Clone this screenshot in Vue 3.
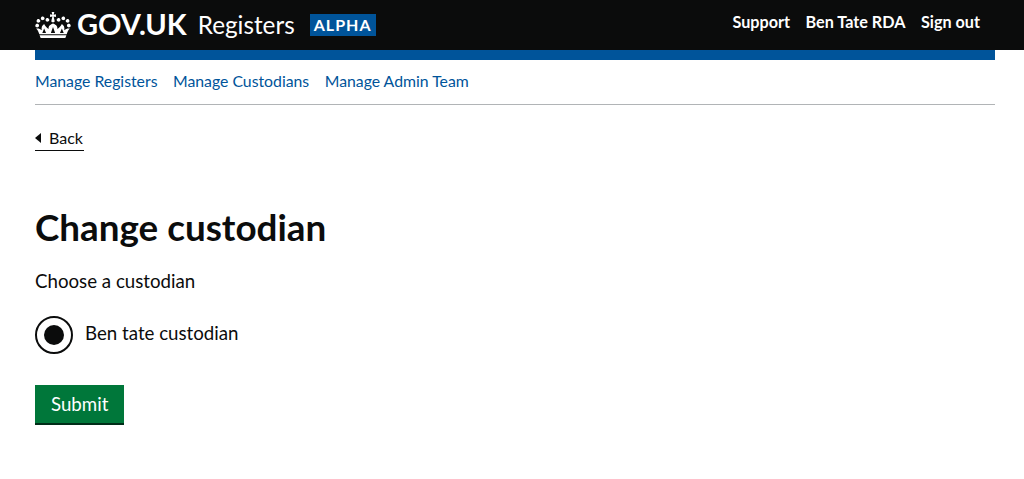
<template>
  <div class="page">
    <header class="header">
      <div class="header__inner">
        <a class="logo" href="#">
          <svg class="logo__crown" viewBox="0 0 132 97" aria-hidden="true">
            <path fill="currentColor" d="M25 30.2c3.5 1.5 7.7-.2 9.1-3.7 1.5-3.6-.2-7.8-3.9-9.2-3.6-1.4-7.6.3-9.1 3.9-1.4 3.5.3 7.5 3.9 9zM9 39.5c3.6 1.5 7.8-.2 9.2-3.7 1.5-3.6-.2-7.8-3.9-9.1-3.6-1.5-7.6.2-9.1 3.8-1.4 3.5.3 7.5 3.8 9zM4.4 57.2c3.5 1.5 7.7-.2 9.1-3.8 1.5-3.6-.2-7.7-3.9-9.1-3.5-1.5-7.6.3-9.1 3.8-1.4 3.5.3 7.6 3.9 9.1zm38.3-21.4c3.5 1.5 7.7-.2 9.1-3.8 1.5-3.6-.2-7.7-3.9-9.1-3.6-1.5-7.6.3-9.1 3.8-1.3 3.6.4 7.7 3.9 9.1zm64.4-5.6c-3.6 1.5-7.8-.2-9.1-3.7-1.5-3.6.2-7.8 3.8-9.2 3.6-1.4 7.7.3 9.2 3.9 1.3 3.5-.4 7.5-3.9 9zm15.9 9.3c-3.6 1.5-7.7-.2-9.1-3.7-1.5-3.6.2-7.8 3.7-9.1 3.6-1.5 7.7.2 9.2 3.8 1.5 3.5-.3 7.5-3.8 9zm4.7 17.7c-3.6 1.5-7.8-.2-9.2-3.8-1.5-3.6.2-7.7 3.9-9.1 3.6-1.5 7.7.3 9.2 3.8 1.3 3.5-.4 7.6-3.9 9.1zM89.3 35.8c-3.6 1.5-7.8-.2-9.2-3.8-1.4-3.6.2-7.7 3.9-9.1 3.6-1.5 7.7.3 9.2 3.8 1.4 3.6-.3 7.7-3.9 9.1z" />
            <path fill="currentColor" d="M61 0h10l-2.6 10.500 8.600-2.500v11l-8.600-2.500 3.600 16c.8 4-2 6-6 6s-6.800-2-6-6l3.600-16-8.600 2.500V8l8.600 2.500z" />
            <path fill="currentColor" fill-rule="evenodd" d="M20 97 L112 97 L116 87 L16 87 Z M15 83 L117 83 C120 74 124 66 129 62 C122 60 115 62 108 68 C110 58 107 50 99 45 C95 52 90 60 82 63 C84 56 80 48 66 43 C52 48 48 56 50 63 C42 60 37 52 33 45 C25 50 22 58 24 68 C17 62 10 60 3 62 C8 66 12 74 15 83 Z M26 78 L40 78 L33 62 Z M58 78 L74 78 L66 56 Z M92 78 L106 78 L99 62 Z" />
          </svg>
          <span class="logo__text">GOV.UK</span>
        </a>
        <span class="service">Registers</span>
        <strong class="tag">ALPHA</strong>
        <nav class="account">
          <a href="#">Support</a>
          <a href="#">Ben Tate RDA</a>
          <a href="#">Sign out</a>
        </nav>
      </div>
    </header>

    <main class="container">
      <div class="stripe"></div>
      <nav class="subnav">
        <a v-for="link in links" :key="link" href="#">{{ link }}</a>
      </nav>

      <a class="back" href="#">Back</a>

      <h1 class="title">Change custodian</h1>

      <form @submit.prevent>
        <p class="legend">Choose a custodian</p>
        <label class="radio">
          <span class="radio__mark"></span>
          <span class="radio__label">Ben tate custodian</span>
        </label>
        <button class="button" type="submit">Submit</button>
      </form>
    </main>
  </div>
</template>

<script setup>
const links = ['Manage Registers', 'Manage Custodians', 'Manage Admin Team']
</script>

<style>
html,
body {
  background: #fff;
}
</style>

<style scoped>
.page {
  font-family: Lato, "Open Sans", sans-serif;
  color: #0b0c0c;
  font-size: 16px;
  min-height: 479px;
}

.header {
  background: #0b0c0c;
  height: 50px;
  color: #fff;
}

.header__inner {
  display: flex;
  align-items: center;
  height: 50px;
  padding: 0 44px 0 35px;
}

.logo {
  display: flex;
  align-items: center;
  color: #fff;
  text-decoration: none;
}

.logo__crown {
  width: 36px;
  height: 26px;
  margin-right: 6px;
}

.logo__text {
  font-size: 29px;
  font-weight: 700;
  line-height: 1;
  padding-bottom: 3px;
}

.service {
  margin-left: 11px;
  padding-bottom: 2px;
  font-size: 24.3px;
}

.tag {
  margin-left: 15px;
  padding: 0 4px;
  background: #00549a;
  font-size: 16px;
  line-height: 22px;
  letter-spacing: 1px;
}

.account {
  display: flex;
  gap: 15.5px;
  margin-left: auto;
  padding-bottom: 8px;
  font-size: 16.2px;
  font-weight: 700;
}

.account a {
  color: #fff;
  text-decoration: none;
}

.container {
  margin: 0 29px 0 35px;
}

.stripe {
  height: 10px;
  background: #00549a;
}

.subnav {
  display: flex;
  gap: 15.5px;
  height: 45px;
  padding-top: 11px;
  box-sizing: border-box;
  border-bottom: 1px solid #b1b4b6;
  font-size: 15.8px;
  line-height: 20px;
}

.subnav a {
  color: #00549a;
  text-decoration: none;
}

.back {
  display: table;
  margin-top: 23px;
  padding-left: 14px;
  padding-right: 1px;
  padding-bottom: 2px;
  position: relative;
  color: #0b0c0c;
  font-size: 16px;
  line-height: 20px;
  text-decoration: none;
  border-bottom: 1px solid #0b0c0c;
}

.back::before {
  content: "";
  position: absolute;
  left: 0;
  top: 5px;
  border-style: solid;
  border-width: 5px 6px 5px 0;
  border-color: transparent #0b0c0c transparent transparent;
}

.title {
  margin: 54px 0 0;
  font-size: 36.8px;
  font-weight: 700;
  line-height: 44px;
}

.legend {
  margin: 19px 0 0;
  font-size: 18.7px;
  line-height: 26px;
}

.radio {
  display: flex;
  align-items: center;
  gap: 12px;
  margin-top: 22px;
  font-size: 18.7px;
}

.radio__label {
  padding-bottom: 4px;
}

.radio__mark {
  box-sizing: border-box;
  width: 38px;
  height: 38px;
  border: 2px solid #0b0c0c;
  border-radius: 50%;
  display: flex;
  align-items: center;
  justify-content: center;
}

.radio__mark::after {
  content: "";
  width: 20px;
  height: 20px;
  border-radius: 50%;
  background: #0b0c0c;
}

.button {
  display: block;
  margin-top: 31px;
  height: 38px;
  padding: 0 16px;
  border: 0;
  background: #00773a;
  box-shadow: 0 2px 0 #002d18;
  color: #fff;
  font-family: inherit;
  font-size: 18.7px;
}
</style>
